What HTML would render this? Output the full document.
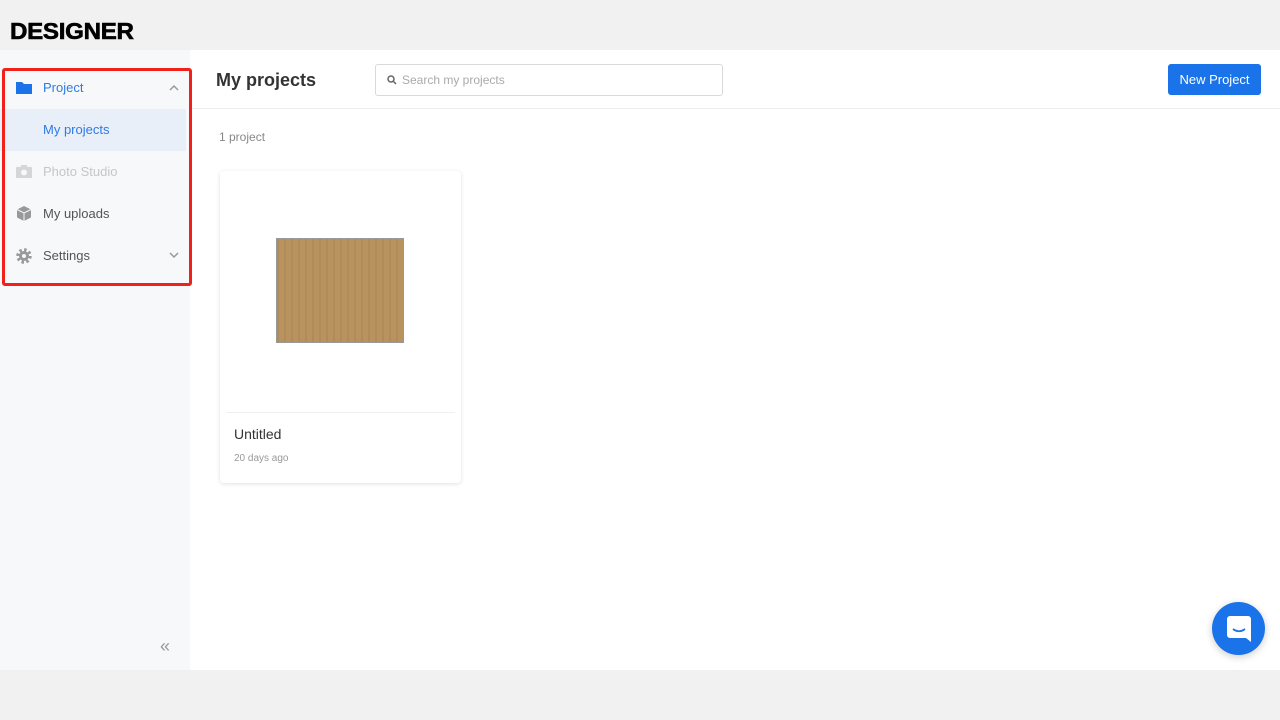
<!DOCTYPE html>
<html><head><style>
body{margin:0;width:1280px;height:720px;background:#f1f1f1;font-family:"Liberation Sans",sans-serif;position:relative;overflow:hidden}
.logo{position:absolute;left:10px;top:18px;font-weight:900;font-size:23px;color:#000;letter-spacing:-0.3px;transform:scaleX(1.05);transform-origin:left;-webkit-text-stroke:0.6px #000}
.side{position:absolute;left:0;top:50px;width:190px;height:620px;background:#f7f8f9}
.main{position:absolute;left:190px;top:50px;width:1090px;height:620px;background:#fff}
.red{position:absolute;left:2px;top:68px;width:184px;height:212px;border:3px solid #f0201a;border-radius:3px;z-index:5}
.item{position:absolute;left:0;width:186px;height:42px;font-size:13px;color:#555;line-height:42px}
.item span{position:absolute;left:43px}
.hdr{position:absolute;left:0;right:0;top:0;height:58px;border-bottom:1px solid #eee}
</style></head><body>
<div class="logo">DESIGNER</div>
<div class="side">
<div class="item" style="top:17px;color:#2f7be6"><svg style="position:absolute;left:16px;top:14px" width="16" height="13"><path d="M0 1h6l2 2h8v10H0z" fill="#1a73e8"/></svg><span>Project</span><svg style="position:absolute;left:169px;top:17px" width="10" height="7"><path d="M1 6l4-4 4 4" stroke="#999" stroke-width="1.5" fill="none"/></svg></div>
<div class="item" style="top:59px;background:#e9eff8;color:#2f7be6"><span>My projects</span></div>
<div class="item" style="top:101px;color:#c6c6c6"><svg style="position:absolute;left:16px;top:14px" width="16" height="13"><rect y="2" width="16" height="11" rx="1" fill="#d6d6d6"/><rect x="5" y="0" width="6" height="3" fill="#d6d6d6"/><circle cx="8" cy="7.5" r="3" fill="#f7f8f9"/></svg><span>Photo Studio</span></div>
<div class="item" style="top:143px"><svg style="position:absolute;left:16px;top:13px" width="16" height="16"><path d="M8 0l7 3.5v8L8 15 1 11.5v-8z" fill="#999"/><path d="M1 3.5L8 7l7-3.5M8 7v8" stroke="#f7f8f9" stroke-width="1" fill="none"/></svg><span>My uploads</span></div>
<div class="item" style="top:185px"><svg style="position:absolute;left:16px;top:13px" width="16" height="16"><circle cx="8" cy="8" r="6" fill="none" stroke="#999" stroke-width="3.5" stroke-dasharray="2.4 2.3"/><circle cx="8" cy="8" r="5" fill="#999"/><circle cx="8" cy="8" r="2" fill="#f7f8f9"/></svg><span>Settings</span><svg style="position:absolute;left:169px;top:17px" width="10" height="7"><path d="M1 1l4 4 4-4" stroke="#999" stroke-width="1.5" fill="none"/></svg></div>
<div style="position:absolute;left:160px;top:586px;color:#999;font-size:18px">«</div>
</div>
<div class="red"></div>
<div class="main">
<div class="hdr"></div>
<div style="position:absolute;left:26px;top:20px;font-size:18px;font-weight:bold;color:#333">My projects</div>
<div style="position:absolute;left:185px;top:14px;width:346px;height:30px;border:1px solid #d9d9d9;border-radius:3px"><svg style="position:absolute;left:11px;top:10px" width="10" height="10"><circle cx="4" cy="4" r="3" stroke="#666" stroke-width="1.5" fill="none"/><path d="M6 6l3 3" stroke="#666" stroke-width="1.5"/></svg><span style="position:absolute;left:26px;top:8px;font-size:12px;color:#aaa">Search my projects</span></div>
<div style="position:absolute;left:978px;top:14px;width:93px;height:31px;background:#1a73e8;border-radius:3px;color:#fff;font-size:13px;line-height:31px;text-align:center">New Project</div>
<div style="position:absolute;left:29px;top:80px;font-size:12px;color:#888">1 project</div>
<div style="position:absolute;left:30px;top:121px;width:241px;height:312px;background:#fff;border-radius:4px;box-shadow:0 1px 4px rgba(0,0,0,.12)">
<div style="position:absolute;left:56px;top:67px;width:128px;height:105px;background:#b8935f;border:1px solid #999;box-sizing:border-box;background-image:repeating-linear-gradient(90deg,rgba(0,0,0,.05) 0 2px,transparent 2px 7px)"></div>
<div style="position:absolute;left:6px;right:6px;top:241px;border-top:1px solid #f0f0f0"></div>
<div style="position:absolute;left:14px;top:255px;font-size:14px;color:#333">Untitled</div>
<div style="position:absolute;left:14px;top:282px;font-size:10px;color:#999">20 days ago</div>
</div>
</div>
<div style="position:absolute;left:1212px;top:602px;width:53px;height:53px;border-radius:50%;background:#1a73e8;box-shadow:0 2px 8px rgba(0,0,0,.2)"><svg style="position:absolute;left:15px;top:14px" width="24" height="26"><path d="M3 0h18a3 3 0 0 1 3 3v23l-5-4H3a3 3 0 0 1-3-3V3a3 3 0 0 1 3-3z" fill="#fff"/><path d="M6 13q6 4.5 12 0" stroke="#1a73e8" stroke-width="1.8" fill="none"/></svg></div>
</body></html>
